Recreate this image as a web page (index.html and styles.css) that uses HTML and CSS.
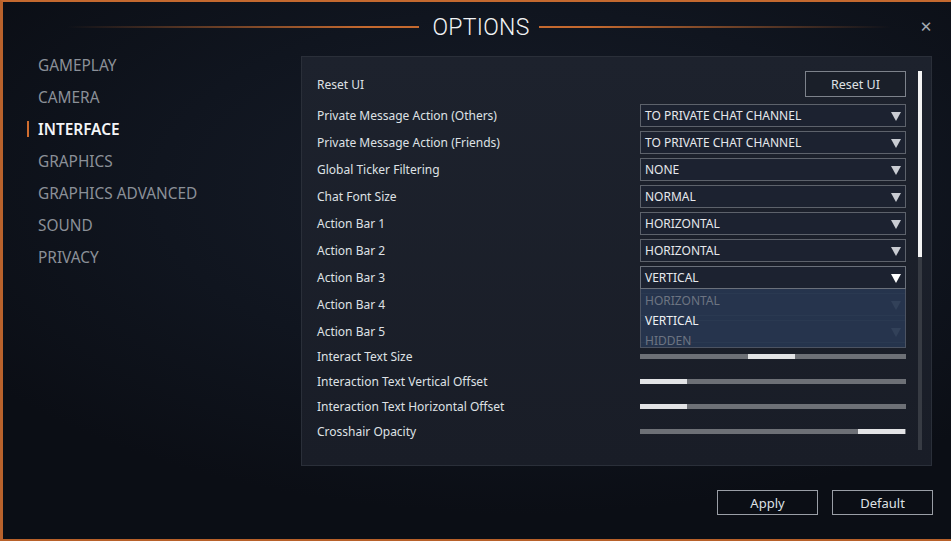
FILE: index.html
```html
<!DOCTYPE html>
<html lang="en">
<head>
    <meta charset="UTF-8">
    <meta name="viewport" content="width=device-width, initial-scale=1.0">
    <title>Options</title>
    <link rel="stylesheet" href="styles.css">
</head>
<body>
<div class="window">
    <div class="header">
        <span class="line line-left"></span>
        <h1 class="title">OPTIONS</h1>
        <span class="line line-right"></span>
        <button class="close" type="button">&#x2715;</button>
    </div>

    <div class="main">
        <ul class="nav">
            <li>GAMEPLAY</li>
            <li>CAMERA</li>
            <li class="active">INTERFACE</li>
            <li>GRAPHICS</li>
            <li>GRAPHICS ADVANCED</li>
            <li>SOUND</li>
            <li>PRIVACY</li>
        </ul>

        <div class="panel">
            <div class="rows">
                <div class="row row-reset">
                    <span class="label">Reset UI</span>
                    <button class="btn btn-reset" type="button">Reset UI</button>
                </div>
                <div class="row">
                    <span class="label">Private Message Action (Others)</span>
                    <div class="select">TO PRIVATE CHAT CHANNEL<span class="arrow"></span></div>
                </div>
                <div class="row">
                    <span class="label">Private Message Action (Friends)</span>
                    <div class="select">TO PRIVATE CHAT CHANNEL<span class="arrow"></span></div>
                </div>
                <div class="row">
                    <span class="label">Global Ticker Filtering</span>
                    <div class="select">NONE<span class="arrow"></span></div>
                </div>
                <div class="row">
                    <span class="label">Chat Font Size</span>
                    <div class="select">NORMAL<span class="arrow"></span></div>
                </div>
                <div class="row">
                    <span class="label">Action Bar 1</span>
                    <div class="select">HORIZONTAL<span class="arrow"></span></div>
                </div>
                <div class="row">
                    <span class="label">Action Bar 2</span>
                    <div class="select">HORIZONTAL<span class="arrow"></span></div>
                </div>
                <div class="row">
                    <span class="label">Action Bar 3</span>
                    <div class="select open">VERTICAL<span class="arrow"></span>
                        <ul class="options">
                            <li>HORIZONTAL</li>
                            <li class="current">VERTICAL</li>
                            <li>HIDDEN</li>
                        </ul>
                    </div>
                </div>
                <!-- these two sit under the open list, only their arrows show through -->
                <div class="row">
                    <span class="label">Action Bar 4</span>
                    <div class="select covered"><span class="arrow"></span></div>
                </div>
                <div class="row">
                    <span class="label">Action Bar 5</span>
                    <div class="select covered"><span class="arrow"></span></div>
                </div>
                <div class="row row-slider first-slider">
                    <span class="label">Interact Text Size</span>
                    <div class="slider"><span class="thumb" style="margin-left: 108px"></span></div>
                </div>
                <div class="row row-slider">
                    <span class="label">Interaction Text Vertical Offset</span>
                    <div class="slider"><span class="thumb" style="margin-left: 0px"></span></div>
                </div>
                <div class="row row-slider">
                    <span class="label">Interaction Text Horizontal Offset</span>
                    <div class="slider"><span class="thumb" style="margin-left: 0px"></span></div>
                </div>
                <div class="row row-slider">
                    <span class="label">Crosshair Opacity</span>
                    <div class="slider"><span class="thumb" style="margin-left: 218px"></span></div>
                </div>
            </div>
            <div class="scrollbar"><div class="scroll-thumb"></div></div>
        </div>
    </div>

    <div class="footer">
        <button class="btn" type="button">Apply</button>
        <button class="btn" type="button">Default</button>
    </div>
</div>
</body>
</html>
```

FILE: styles.css
```css
* { box-sizing: border-box; }
html, body { margin: 0; padding: 0; }
body {
    width: 951px;
    height: 541px;
    overflow: hidden;
    font-family: "Noto Sans", "Open Sans", sans-serif;
    color: #e2e4e8;
    background: radial-gradient(ellipse 70% 60% at 55% 35%, #171d29 0%, #10151f 55%, #0b0e15 100%);
}

.window {
    height: 541px;
    border-top: 2px solid #c4692f;
    border-left: 3px solid #b9622c;
    border-bottom: 2px solid #b8612a;
    display: flex;
    flex-direction: column;
}

/* header */
.header {
    height: 50px;
    display: flex;
    align-items: center;
    padding: 0 18px 0 64px;
}
.line { flex: 1; height: 2px; }
.line-left { background: linear-gradient(to right, rgba(196, 105, 47, 0), #c4692f 85%); margin-right: 13px; }
.line-right { background: linear-gradient(to left, rgba(196, 105, 47, 0), #c4692f 85%); margin-left: 9px; }
.title {
    margin: 0;
    font-family: Roboto, "Liberation Sans", sans-serif;
    font-weight: 300;
    font-size: 23px;
    letter-spacing: 0.3px;
    color: #f2f3f5;
    line-height: 1;
    transform: scaleY(1.05);
}
.close {
    margin-left: 28px;
    width: 14px;
    padding: 0;
    background: none;
    border: none;
    color: #a3a9b1;
    font-size: 15px;
    line-height: 1;
    font-family: "DejaVu Sans", sans-serif;
    cursor: pointer;
}

/* main */
.main { display: flex; height: 414px; }
.nav {
    list-style: none;
    margin: 0;
    padding: 1px 0 0 24px;
    width: 298px;
    display: flex;
    flex-direction: column;
    gap: 6px;
}
.nav li {
    height: 26px;
    line-height: 26px;
    font-size: 15.4px;
    color: #8b9098;
    padding-left: 11px;
}
.nav li.active { color: #f4f5f7; font-weight: 600; padding-left: 0; }
.nav li.active::before {
    content: "";
    display: inline-block;
    width: 2px;
    height: 16px;
    margin-right: 9px;
    vertical-align: -2px;
    background: #d06d2f;
}

.panel {
    margin-top: 4px;
    width: 631px;
    height: 410px;
    border: 1px solid #2a2f39;
    background: linear-gradient(to bottom, #1d222d, #191d27);
    padding: 14px 0 0 15px;
    display: flex;
}
.rows { width: 589px; display: flex; flex-direction: column; gap: 4px; }
.row { display: flex; align-items: center; justify-content: space-between; height: 23px; font-size: 12px; }
.row-reset { height: 26px; margin-bottom: 3px; }
.row-slider { height: 21px; }
.first-slider { margin-top: -1px; }
.label { color: #dfe1e5; }

.btn {
    font-family: "Noto Sans", "Open Sans", sans-serif;
    font-size: 12.5px;
    color: #dfe1e5;
    background: transparent;
    border: 1px solid #9a9ea6;
    cursor: pointer;
}
.btn-reset { width: 101px; height: 26px; background: #1a1f29; border-color: #7d828b; }

.select {
    position: relative;
    width: 266px;
    height: 23px;
    line-height: 21px;
    padding-left: 4px;
    border: 1px solid #5d626b;
    background: #1c2230;
    color: #e6e8ec;
    font-size: 12px;
}
.arrow {
    position: absolute;
    right: 4px;
    top: 7px;
    width: 0;
    height: 0;
    border-left: 5px solid transparent;
    border-right: 5px solid transparent;
    border-top: 9px solid #c9ccd2;
}
.open { border-color: #6a707a; }
.open .arrow { border-top-color: #ffffff; }
.options {
    position: absolute;
    top: 22px;
    left: -1px;
    right: -1px;
    height: 59px;
    margin: 0;
    padding: 2px 0 0 4px;
    list-style: none;
    overflow: hidden;
    background: rgba(39, 54, 80, 0.93);
    border: 1px solid #4c5362;
    border-top: none;
    z-index: 2;
}
.options li { height: 20px; line-height: 20px; color: #6d7482; }
.options li.current { color: #eef0f3; }

.slider { width: 266px; height: 5px; background: #6d7076; display: flex; }
.thumb { width: 47px; height: 5px; background: #e2e3e5; }

.scrollbar { margin-left: 12px; width: 4px; height: 379px; background: #373b43; }
.scroll-thumb { height: 186px; background: #f4f4f4; }

/* footer */
.footer {
    display: flex;
    justify-content: flex-end;
    gap: 14px;
    padding: 24px 18px 0 0;
}
.footer .btn { width: 101px; height: 25px; font-size: 13px; }
```
